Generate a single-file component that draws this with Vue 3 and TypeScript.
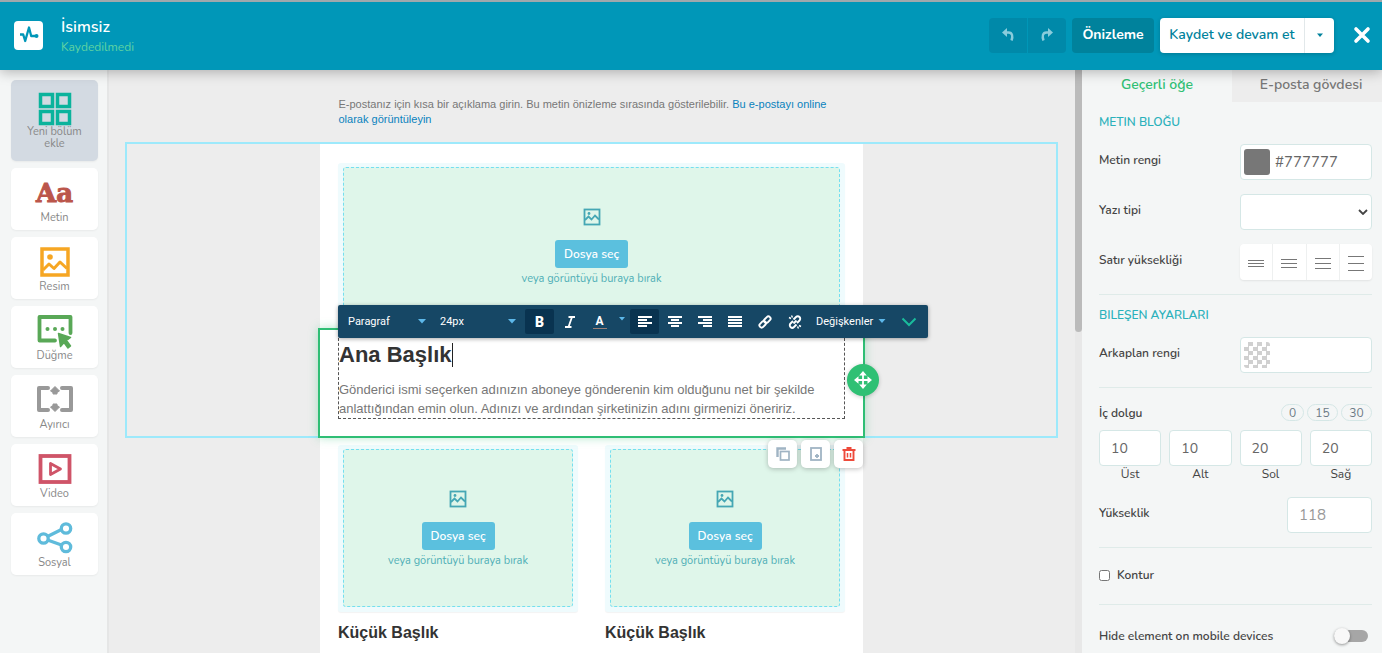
<script setup lang="ts">
import { ref } from 'vue'

interface Tool { id: string; label: string }

const tools: Tool[] = [
  { id: 'layout', label: 'Yeni bölüm ekle' },
  { id: 'text', label: 'Metin' },
  { id: 'image', label: 'Resim' },
  { id: 'button', label: 'Düğme' },
  { id: 'divider', label: 'Ayırıcı' },
  { id: 'video', label: 'Video' },
  { id: 'social', label: 'Sosyal' },
]
const activeTool = ref('layout')
const textColor = ref('#777777')
const backgroundColor = ref('')
const height = ref('')
const outline = ref(false)
const hidden = ref(false)
const presets = [0, 15, 30]
const paddings = ref([
  { id: 'top', label: 'Üst', value: '10' },
  { id: 'bottom', label: 'Alt', value: '10' },
  { id: 'left', label: 'Sol', value: '20' },
  { id: 'right', label: 'Sağ', value: '20' },
])
const lineHeights = [
  { label: 'Sıkı', ys: [14, 17, 20] },
  { label: 'Normal', ys: [13, 17, 21] },
  { label: 'Geniş', ys: [12, 17, 22] },
  { label: 'Çok geniş', ys: [10, 17, 24] },
]
const aligns = [
  { label: 'Sola hizala', rows: [[0, 14], [0, 9], [0, 14], [0, 9]] },
  { label: 'Ortala', rows: [[0, 14], [3, 8], [0, 14], [3, 8]] },
  { label: 'Sağa hizala', rows: [[0, 14], [5, 9], [0, 14], [5, 9]] },
  { label: 'İki yana yasla', rows: [[0, 14], [0, 14], [0, 14], [0, 14]] },
]
const columns = ['Küçük Başlık', 'Küçük Başlık']

function applyPreset(value: number) {
  paddings.value.forEach((p) => { p.value = String(value) })
}
</script>

<template>
  <div class="app">
    <header class="topbar">
      <div class="logo">
        <svg width="20" height="20" viewBox="0 0 20 20" fill="none">
          <path d="M1 9.500h3.200l2 6.500L10 2.500l2.200 8.500h4" stroke="#0097b8" stroke-width="2.300" stroke-linejoin="round" />
          <circle cx="17.500" cy="11" r="2" fill="#0097b8" />
        </svg>
      </div>
      <div class="titles">
        <h1>İsimsiz</h1>
        <p>Kaydedilmedi</p>
      </div>
      <div class="history">
        <button type="button" aria-label="Geri al">
          <svg width="14" height="16" viewBox="0 0 14 16" fill="none"><path d="M4 5.500h3.500c4 0 4.500 4 3 8" stroke="#8accdc" stroke-width="2.400" /><path d="M1 5.500L6 1v9z" fill="#8accdc" /></svg>
        </button>
        <button type="button" aria-label="Yinele">
          <svg width="14" height="16" viewBox="0 0 14 16" fill="none"><path d="M10 5.500H6.500c-4 0-4.500 4-3 8" stroke="#8accdc" stroke-width="2.400" /><path d="M13 5.500L8 1v9z" fill="#8accdc" /></svg>
        </button>
      </div>
      <button type="button" class="preview">Önizleme</button>
      <div class="save">
        <button type="button" class="save-main">Kaydet ve devam et</button>
        <button type="button" class="save-more" aria-label="Diğer seçenekler">
          <svg width="8" height="5" viewBox="0 0 8 5"><path d="M1 0.500h6L4 4z" fill="#00829c" /></svg>
        </button>
      </div>
      <button type="button" class="close" aria-label="Kapat">
        <svg width="18" height="18" viewBox="0 0 18 18"><path d="M3 3l12 12M15 3L3 15" stroke="#fff" stroke-width="3.600" stroke-linecap="round" /></svg>
      </button>
    </header>

    <div class="workspace">
      <nav class="tools">
        <button
          v-for="t in tools"
          :key="t.id"
          type="button"
          class="tool"
          :class="[t.id, { active: t.id === activeTool }]"
          @click="activeTool = t.id"
        >
          <svg v-if="t.id === 'layout'" width="34" height="34" viewBox="0 0 34 34" fill="none" stroke="#0bb39c" stroke-width="3.500">
            <rect x="2.500" y="2.500" width="12" height="12" /><rect x="19.500" y="2.500" width="12" height="12" /><rect x="2.500" y="19.500" width="12" height="12" /><rect x="19.500" y="19.500" width="12" height="12" />
          </svg>
          <svg v-else-if="t.id === 'image'" width="36" height="32" viewBox="0 0 36 32" fill="none" stroke="#f6a623">
            <rect x="5" y="3" width="26" height="26" stroke-width="3.500" />
            <path d="M6 24l6-6 5 4.500 6-6.500 7 6.500" stroke-width="3" stroke-linejoin="round" /><circle cx="13" cy="11" r="2.800" fill="#f6a623" stroke="none" />
          </svg>
          <svg v-else-if="t.id === 'button'" width="36" height="36" viewBox="0 0 36 36" fill="none">
            <path d="M18 26.500H2.500V3h31v16" stroke="#59a857" stroke-width="3.800" stroke-linejoin="round" stroke-linecap="round" />
            <g fill="#59a857"><circle cx="10.500" cy="15" r="2" /><circle cx="18" cy="15" r="2" /><circle cx="25.500" cy="15" r="2" />
              <path d="M21.500 19.500l12 4-4 3 4 5.500-2.500 2-4-5.500-3.500 4z" stroke="#59a857" stroke-width="1.500" stroke-linejoin="round" /></g>
          </svg>
          <svg v-else-if="t.id === 'divider'" width="38" height="28" viewBox="0 0 38 28" fill="none">
            <path d="M12 3H3v22h9M26 3h9v22h-9" stroke="#999" stroke-width="4" stroke-linecap="round" stroke-linejoin="round" />
            <path d="M19 1.500l4.500 4.500-2.500 1.500V9h-4V7.500L14.500 6zM19 26.500l4.500-4.500-2.500-1.500V19h-4v1.500L14.500 22z" fill="#999" stroke="#999" stroke-width="1" stroke-linejoin="round" />
          </svg>
          <svg v-else-if="t.id === 'video'" width="36" height="32" viewBox="0 0 36 32" fill="none" stroke="#cf5468">
            <rect x="3.500" y="3" width="29" height="26" stroke-width="3.800" /><path d="M13.500 10.500v11l10-5.500z" stroke-width="2.800" stroke-linejoin="round" />
          </svg>
          <svg v-else-if="t.id === 'social'" width="36" height="32" viewBox="0 0 36 32" fill="none" stroke="#5fbbdb" stroke-width="3.300">
            <path d="M10.500 14.500l14-7M10.500 18l14 5" /><circle cx="6.500" cy="16.500" r="4.700" /><circle cx="29" cy="6.500" r="4.700" /><circle cx="29" cy="25" r="4.700" />
          </svg>
          <span v-else class="aa" aria-hidden="true">Aa</span>
          <span class="tool-label">{{ t.label }}</span>
        </button>
      </nav>

      <main class="canvas">
        <p class="preheader">
          E-postanız için kısa bir açıklama girin. Bu metin önizleme sırasında gösterilebilir.
          <a href="#">Bu e-postayı online olarak görüntüleyin</a>
        </p>
        <section class="section selected">
          <div class="sheet first">
            <div class="drop-frame wide">
              <div class="drop">
                <svg width="18" height="18" viewBox="0 0 18 18" fill="none" stroke="#45a7b4"><rect x="1.500" y="1.500" width="15" height="15" stroke-width="1.800" /><path d="M2 12l3.500-3.500 3 3 3.500-4 4 4" stroke-width="1.800" /><circle cx="6" cy="5.500" r="1.400" fill="#45a7b4" stroke="none" /></svg>
                <button type="button">Dosya seç</button>
                <span>veya görüntüyü buraya bırak</span>
              </div>
            </div>
            <div class="module">
              <div class="editable">
                <h2>Ana Başlık<i class="caret"></i></h2>
                <p>Gönderici ismi seçerken adınızın aboneye gönderenin kim olduğunu net bir şekilde anlattığından emin olun. Adınızı ve ardından şirketinizin adını girmenizi öneririz.</p>
              </div>

              <div class="toolbar" role="toolbar" aria-label="Metin biçimi">
                <label class="pick para">
                  <select aria-label="Blok türü"><option>Paragraf</option></select>
                  <svg width="8" height="5" viewBox="0 0 8 5"><path d="M0 0h8L4 4.500z" fill="#5db8ea" /></svg>
                </label>
                <label class="pick size">
                  <select aria-label="Yazı boyutu"><option>24px</option></select>
                  <svg width="8" height="5" viewBox="0 0 8 5"><path d="M0 0h8L4 4.500z" fill="#5db8ea" /></svg>
                </label>
                <button type="button" class="tb on" aria-label="Kalın"><b>B</b></button>
                <button type="button" class="tb" aria-label="İtalik">
                  <svg width="12" height="12" viewBox="0 0 12 12"><path d="M4.500 1H11M1 11h6.500M8 1L4.500 11" stroke="#fff" stroke-width="1.800" fill="none" /></svg>
                </button>
                <button type="button" class="tb" aria-label="Yazı rengi"><span class="ink">A</span></button>
                <button type="button" class="tb narrow" aria-label="Renk seç">
                  <svg width="6" height="4" viewBox="0 0 6 4"><path d="M0 0h6L3 3.500z" fill="#5db8ea" /></svg>
                </button>
                <button v-for="(a, i) in aligns" :key="a.label" type="button" class="tb" :class="{ on: i === 0 }" :aria-label="a.label">
                  <svg width="14" height="11" viewBox="0 0 14 11"><rect v-for="(r, n) in a.rows" :key="n" :x="r[0]" :y="n * 3" :width="r[1]" height="2" fill="#fff" /></svg>
                </button>
                <button type="button" class="tb" aria-label="Bağlantı ekle">
                  <svg width="14" height="14" viewBox="0 0 14 14" fill="none" stroke="#fff" stroke-width="1.900"><rect x="-3.700" y="-2.200" width="7.400" height="4.400" rx="2.200" transform="translate(4.700 9.300) rotate(-45)" /><rect x="-3.700" y="-2.200" width="7.400" height="4.400" rx="2.200" transform="translate(9.300 4.700) rotate(-45)" /></svg>
                </button>
                <button type="button" class="tb" aria-label="Bağlantıyı kaldır">
                  <svg width="14" height="14" viewBox="0 0 14 14" fill="none" stroke="#fff" stroke-width="1.900"><path d="M5.500 4.500L8 2a2.300 2.300 0 0 1 3.500 3.500L9 8M8.500 9.500L6 12a2.300 2.300 0 0 1-3.500-3.500L5 6M5.500 8.500l3-3" /><path d="M1 2.500l2 1M3.500 0.500l1 2M13 11.500l-2-1M10.500 13.500l-1-2" stroke-width="1.400" /></svg>
                </button>
                <button type="button" class="vars">Değişkenler
                  <svg width="8" height="5" viewBox="0 0 8 5"><path d="M0.500 0h7L4 4z" fill="#5db8ea" /></svg>
                </button>
                <button type="button" class="done" aria-label="Tamam">
                  <svg width="16" height="10" viewBox="0 0 16 10"><path d="M1.500 1.500L8 8l6.500-6.500" fill="none" stroke="#1abc9c" stroke-width="2" /></svg>
                </button>
              </div>

              <button type="button" class="move" aria-label="Taşı">
                <svg width="18" height="18" viewBox="0 0 18 18"><path d="M9 2v14M2 9h14" stroke="#fff" stroke-width="1.800" /><path d="M9 0l3.800 4.500H5.200zM9 18l3.800-4.500H5.200zM0 9l4.500-3.800v7.600zM18 9l-4.500-3.800v7.600z" fill="#fff" /></svg>
              </button>
              <div class="actions">
                <button type="button" aria-label="Kopyala">
                  <svg width="14" height="14" viewBox="0 0 14 14" fill="none" stroke="#a0b4c4"><path d="M1.500 10V1.500H10" stroke-width="2.400" /><rect x="4.500" y="4.500" width="8.500" height="8.500" stroke-width="1.700" /></svg>
                </button>
                <button type="button" aria-label="Kaydet">
                  <svg width="12" height="14" viewBox="0 0 12 14"><rect x="1" y="1" width="10" height="12" fill="none" stroke="#a0b4c4" stroke-width="1.800" /><path d="M7 7v4M5 9h4" stroke="#a0b4c4" stroke-width="1.800" /></svg>
                </button>
                <button type="button" aria-label="Sil">
                  <svg width="14" height="14" viewBox="0 0 14 14" fill="none" stroke="#ee4a3b"><path d="M0.500 3h13M4.500 1h5" stroke-width="1.900" /><path d="M2.500 3v10h9V3" stroke-width="1.900" /><path d="M5.500 6v4.500M8.500 6v4.500" stroke-width="1.500" /></svg>
                </button>
              </div>
            </div>
          </div>
        </section>

        <section class="section">
          <div class="sheet pair">
            <article v-for="(title, i) in columns" :key="i">
              <div class="drop-frame">
                <div class="drop">
                  <svg width="18" height="18" viewBox="0 0 18 18" fill="none" stroke="#45a7b4"><rect x="1.500" y="1.500" width="15" height="15" stroke-width="1.800" /><path d="M2 12l3.500-3.500 3 3 3.500-4 4 4" stroke-width="1.800" /><circle cx="6" cy="5.500" r="1.400" fill="#45a7b4" stroke="none" /></svg>
                  <button type="button">Dosya seç</button>
                  <span>veya görüntüyü buraya bırak</span>
                </div>
              </div>
              <h3>{{ title }}</h3>
            </article>
          </div>
        </section>
      </main>
      <div class="scroll" aria-hidden="true"><div class="thumb"></div></div>

      <aside class="panel">
        <div class="tabs" role="tablist">
          <button type="button" role="tab" class="tab current" aria-selected="true">Geçerli öğe</button>
          <button type="button" role="tab" class="tab" aria-selected="false">E-posta gövdesi</button>
        </div>
        <div class="settings">
          <h4>METIN BLOĞU</h4>
          <div class="row">
            <label for="text-color">Metin rengi</label>
            <div class="field color"><span class="swatch solid"></span><input id="text-color" v-model="textColor" type="text"></div>
          </div>
          <div class="row">
            <label for="font">Yazı tipi</label>
            <div class="field select">
              <select id="font"><option></option></select>
              <svg width="10" height="6" viewBox="0 0 10 6"><path d="M1 1l4 4 4-4" fill="none" stroke="#444" stroke-width="1.800" /></svg>
            </div>
          </div>
          <div class="row">
            <span id="lh-label" class="row-label">Satır yüksekliği</span>
            <div class="heights" role="group" aria-labelledby="lh-label">
              <button v-for="l in lineHeights" :key="l.label" type="button" :aria-label="l.label">
                <svg width="16" height="32" viewBox="0 0 16 32"><path v-for="y in l.ys" :key="y" :d="`M0 ${y + 0.5}h16`" stroke="#777" /></svg>
              </button>
            </div>
          </div>
          <hr>
          <h4>BILEŞEN AYARLARI</h4>
          <div class="row">
            <label for="bg-color">Arkaplan rengi</label>
            <div class="field color"><span class="swatch checker"></span><input id="bg-color" v-model="backgroundColor" type="text"></div>
          </div>
          <hr>
          <div class="pad-head">
            <span class="row-label">İç dolgu</span>
            <button v-for="p in presets" :key="p" type="button" class="pill" @click="applyPreset(p)">{{ p }}</button>
          </div>
          <div class="pads">
            <div v-for="p in paddings" :key="p.id" class="pad">
              <input :id="`pad-${p.id}`" v-model="p.value" type="text">
              <label :for="`pad-${p.id}`">{{ p.label }}</label>
            </div>
          </div>
          <div class="row tall">
            <label for="height">Yükseklik</label>
            <input id="height" v-model="height" class="height" type="text" placeholder="118">
          </div>
          <hr>
          <label class="check"><input v-model="outline" type="checkbox">Kontur</label>
          <hr>
          <div class="switch-row">
            <label for="hide">Hide element on mobile devices</label>
            <input id="hide" v-model="hidden" class="switch" type="checkbox" role="switch">
          </div>
        </div>
      </aside>
    </div>
  </div>
</template>

<style>
body { overflow: hidden; background: #ededed; }
</style>

<style scoped>
.app, .app * { box-sizing: border-box; }
.app { display: flex; flex-direction: column; height: 100vh; font-family: Nunito, Lato, "Open Sans", sans-serif; color: #444; }
button, input, select { font: inherit; color: inherit; margin: 0; }
button { border: 0; background: none; padding: 0; cursor: pointer; display: flex; align-items: center; justify-content: center; }
input, select { outline: 0; }
svg { display: block; flex: none; }
h1, h2, h3, h4, p { margin: 0; }

.topbar { position: relative; z-index: 5; flex: none; display: flex; align-items: center; height: 70px; padding: 0 11px 2px 14px; background: #0097b8; border-top: 2px solid #9fa8ac; box-shadow: 0 2px 12px rgba(0, 0, 0, .28); }
.logo { display: grid; place-items: center; width: 29px; height: 29px; border-radius: 4px; background: #fff; }
.titles { flex: 1; margin-left: 18px; padding-top: 4px; }
.titles h1 { font-size: 16px; line-height: 20px; font-weight: 600; color: #fff; }
.titles p { font-size: 12px; line-height: 20px; color: #5fd3a2; }
.history { display: flex; gap: 1px; height: 35px; margin-right: 6px; }
.history button { width: 38px; background: #0089a9; }
.history button:first-child { border-radius: 4px 0 0 4px; }
.history button:last-child { border-radius: 0 4px 4px 0; }
.preview { width: 82px; height: 35px; margin-right: 6px; border-radius: 4px; background: #00829c; color: #fff; font-size: 14px; font-weight: 700; padding-bottom: 2px; }
.save { display: flex; height: 35px; border-radius: 4px; background: #fff; box-shadow: 0 1px 4px rgba(0, 0, 0, .2); margin-right: 19px; }
.save-main { width: 145px; color: #00829c; font-size: 14px; font-weight: 600; border-right: 1px solid #e2e8ea; padding-bottom: 2px; }
.save-more { width: 29px; }

.workspace { flex: 1; display: flex; min-height: 0; }
.tools { flex: none; width: 109px; padding: 10px 9px 10px 11px; display: flex; flex-direction: column; gap: 7px; background: #f4f6f6; border-right: 2px solid #e5e6e6; }
.tool { flex: none; flex-direction: column; justify-content: flex-end; gap: 3px; width: 87px; height: 62px; padding-bottom: 6px; border-radius: 5px; background: #fff; box-shadow: 0 1px 2px rgba(0, 0, 0, .05); color: #888; font-size: 11px; line-height: 12px; }
.tool.layout { height: 81px; padding: 0 12px 11px; gap: 0; }
.tool.active { background: #d3dae2; }
.tool.button { gap: 0; }
.tool.divider { gap: 6px; }
.aa { font-family: "DejaVu Serif", serif; font-size: 26px; line-height: 32px; font-weight: 700; color: #bb564b; -webkit-text-stroke: 1px #bb564b; }

.canvas { flex: 1; min-width: 0; overflow: hidden; background: #ededed; font-family: Arial, "Liberation Sans", sans-serif; }
.preheader { max-width: 507px; margin: 27px auto 15px; font-size: 11px; line-height: 15px; color: #777; }
.preheader a { color: #0a82bd; text-decoration: none; }
.section { margin: 0 17px 0 16px; border: 0 solid transparent; border-width: 0 2px; }
.section.selected { border: 2px solid #9de9fb; border-bottom: 0; box-shadow: 0 2px #9de9fb; }
.sheet { max-width: 543px; margin: 0 auto; background: #fff; }
.first { padding-top: 19px; }
.drop-frame { padding: 4px 5px 5px; background: #effbfd; border-radius: 3px; box-shadow: 0 1px 1px rgba(0, 0, 0, .05); }
.wide { margin: 0 18px; }
.drop { display: flex; flex-direction: column; align-items: center; height: 158px; padding-top: 40px; background: #dff6ea; border: 1px dashed #74dff0; border-radius: 3px; color: #4fafb6; font-family: Nunito, Lato, "Open Sans", sans-serif; font-size: 12px; }
.drop button { width: 73px; height: 28px; margin: 14px 0 4px; border-radius: 3px; background: #5bc0de; color: #fff; font-weight: 600; }
.drop span { font-size: 11px; line-height: 14px; }
.module { position: relative; z-index: 2; padding: 8px 18px 17px; background: #fff; box-shadow: 0 0 0 2px #2fbe75, 0 0 9px 2px rgba(47, 190, 117, .35); }
.editable { border: 1px dashed #555; border-top: 0; color: #777; font-size: 13px; line-height: 19px; padding-top: 3px; }
.editable h2 { display: flex; align-items: center; font-size: 22px; line-height: 27px; margin-bottom: 12px; color: #333; }
.caret { width: 1px; height: 24px; background: #222; }
.toolbar { position: absolute; left: 18px; top: -25px; display: flex; align-items: center; gap: 1px; width: 590px; height: 33px; background: #164765; border-radius: 2px; box-shadow: 0 1px 4px rgba(0, 0, 0, .35); color: #fff; font-family: Roboto, sans-serif; font-size: 11px; }
.pick { display: grid; align-items: center; }
.pick > * { grid-area: 1 / 1; }
.pick svg { justify-self: end; pointer-events: none; }
.pick select { appearance: none; width: 100%; border: 0; padding: 0; background: none; color: #fff; }
.para { width: 78px; margin-left: 10px; }
.size { width: 76px; margin: 0 8px 0 13px; }
.tb { width: 29px; height: 25px; border-radius: 2px; }
.tb.on { background: #093350; }
.tb b { font-size: 14px; font-weight: 900; }
.tb.narrow { width: 14px; height: 25px; align-items: flex-start; padding-top: 8px; }
.ink { width: 14px; font-size: 12px; line-height: 14px; font-weight: 700; border-bottom: 1px solid #9c8078; }
.vars { gap: 5px; margin-left: 6px; }
.done { margin-left: 14px; }
.move { position: absolute; right: -16px; top: 34px; width: 32px; height: 32px; border-radius: 50%; background: #2fc074; box-shadow: 0 1px 4px rgba(0, 0, 0, .2); }
.actions { position: absolute; right: 0; top: 110px; display: flex; gap: 4px; }
.actions button { width: 29px; height: 28px; border-radius: 5px; background: #fff; box-shadow: 0 1px 5px rgba(0, 0, 0, .25); }
.pair { display: grid; grid-template-columns: 1fr 1fr; gap: 27px; padding: 9px 18px 40px; }
.pair h3 { margin-top: 11px; font-size: 16px; line-height: 20px; color: #333; }

.scroll { flex: none; width: 7px; background: #e8e8e8; }
.thumb { width: 7px; height: 45%; border-radius: 0 0 4px 4px; background: #bbb; }

.panel { flex: none; width: 300px; background: #f4f6f6; }
.tabs { display: flex; height: 32px; }
.tab { flex: 0 0 50%; padding-bottom: 4px; background: #ededed; color: #777; font-size: 14px; font-weight: 600; padding-left: 8px; }
.tab.current { background: none; color: #2fc074; padding-left: 0; }
.settings { padding: 12px 10px 0 17px; font-size: 12px; font-weight: 600; }
h4 { font-size: 12px; line-height: 16px; font-weight: 600; color: #2bb1bb; }
.row { display: flex; justify-content: space-between; height: 36px; margin-top: 14px; }
.row > label, .row-label { line-height: 32px; }
.field { display: flex; align-items: center; width: 132px; height: 36px; background: #fff; border: 1px solid #d5e7e6; border-radius: 4px; }
.color { padding-left: 3px; gap: 5px; }
.color input { width: 90px; border: 0; padding: 0; background: none; font-size: 15px; font-weight: 400; color: #666; }
.swatch { flex: none; width: 26px; height: 26px; border-radius: 3px; }
.solid { background: #777; }
.checker { background: repeating-conic-gradient(#d0d0d0 0 25%, #fff 0 50%) 0 0 / 9px 9px; }
.select { display: grid; align-items: center; }
.select > * { grid-area: 1 / 1; }
.select select { appearance: none; width: 100%; height: 100%; border: 0; background: none; }
.select svg { justify-self: end; margin-right: 3px; pointer-events: none; }
.heights { display: flex; gap: 1px; width: 132px; height: 36px; border-radius: 4px; background: #eef0f0; box-shadow: 0 1px 2px rgba(0, 0, 0, .08); overflow: hidden; }
.heights button { flex: 1; background: #fff; }
hr { height: 1px; margin: 14px 0 12px; border: 0; background: #dfebe9; }
.pad-head { display: flex; align-items: center; gap: 3px; height: 17px; margin-top: 16px; }
.pad-head .row-label { flex: 1; }
.pill { width: 31px; height: 17px; border: 1px solid #d5e7e6; border-radius: 9px; font-weight: 400; color: #6c7a85; }
.pill:nth-of-type(1) { width: 23px; }
.pads { display: grid; grid-template-columns: repeat(4, 1fr); gap: 8px; margin-top: 9px; }
.pad { display: flex; flex-direction: column; align-items: center; font-weight: 400; }
.pad input, .height { width: 100%; height: 36px; padding: 0 11px; border: 1px solid #d5e7e6; border-radius: 4px; background: #fff; font-size: 14px; font-weight: 400; color: #666; }
.pad label { line-height: 16px; }
.tall { margin-top: 15px; }
.row .height { width: 85px; font-size: 15px; }
.height::placeholder { color: #999; opacity: 1; }
.check { display: flex; align-items: center; gap: 7px; height: 30px; line-height: 30px; }
.check input { width: 11px; height: 11px; }
.switch-row { display: flex; align-items: center; justify-content: space-between; height: 38px; padding-right: 4px; }
.switch { appearance: none; display: flex; align-items: center; width: 34px; height: 12px; border-radius: 6px; background: #a6a6a6; }
.switch::before { content: ""; width: 16px; height: 16px; border-radius: 50%; background: #f8f8f8; box-shadow: 0 1px 3px rgba(0, 0, 0, .4); }
.switch:checked::before { margin-left: 18px; }
</style>
